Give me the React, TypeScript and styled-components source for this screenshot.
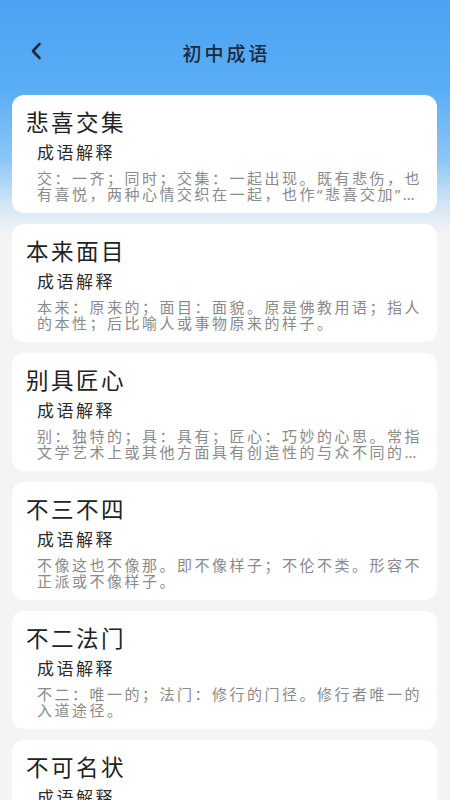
import React from 'react';
import styled, { createGlobalStyle } from 'styled-components';

const GlobalStyle = createGlobalStyle`
  html, body {
    margin: 0;
    padding: 0;
    background: #f4f4f5;
  }
  body {
    font-family: "Noto Sans CJK SC", "Noto Sans", sans-serif;
  }
`;

const Page = styled.div`
  min-height: 800px;
  background: linear-gradient(
    180deg,
    #4ca2f3 0px,
    #5aaef6 90px,
    #8cc6f6 160px,
    #d3e6f5 205px,
    #f4f4f5 235px,
    #f4f4f5 100%
  );
  overflow: hidden;
`;

const Header = styled.div`
  position: relative;
  display: flex;
  align-items: center;
  justify-content: center;
  height: 48px;
  padding-top: 28px;
`;

const BackButton = styled.button`
  position: absolute;
  left: 26px;
  top: 40px;
  width: 20px;
  height: 22px;
  padding: 0;
  border: none;
  background: none;
  display: flex;
  align-items: center;
  justify-content: center;
`;

const Title = styled.h1`
  margin: 0;
  padding-left: 3px;
  font-size: 19px;
  font-weight: 500;
  letter-spacing: 3px;
  color: #1c2a3b;
`;

const List = styled.div`
  display: flex;
  flex-direction: column;
  gap: 11px;
  padding: 19px 13px 20px 12px;
`;

const Card = styled.div`
  background: #ffffff;
  border-radius: 12px;
  padding: 10px 10px 11px 14px;
`;

const Word = styled.div`
  font-size: 22.5px;
  line-height: 32px;
  letter-spacing: 2.5px;
  color: #222222;
`;

const Body = styled.div`
  padding-left: 11px;
`;

const Label = styled.div`
  margin-top: 3px;
  font-size: 17px;
  line-height: 24px;
  letter-spacing: 2.5px;
  color: #2b2b2b;
`;

const Desc = styled.div`
  margin-top: 6px;
  font-family: "Noto Sans", "Noto Sans CJK SC", sans-serif;
  font-size: 15px;
  line-height: 16px;
  letter-spacing: 2.5px;
  color: #8a8a8a;
  display: -webkit-box;
  -webkit-line-clamp: 2;
  -webkit-box-orient: vertical;
  overflow: hidden;
  height: 32px;
`;

type Idiom = {
  word: string;
  desc: string;
};

const idioms: Idiom[] = [
  { word: '悲喜交集', desc: '交：一齐；同时；交集：一起出现。既有悲伤，也有喜悦，两种心情交织在一起，也作“悲喜交加”。又作“悲喜交并”。' },
  { word: '本来面目', desc: '本来：原来的；面目：面貌。原是佛教用语；指人的本性；后比喻人或事物原来的样子。' },
  { word: '别具匠心', desc: '别：独特的；具：具有；匠心：巧妙的心思。常指文学艺术上或其他方面具有创造性的与众不同的构思。' },
  { word: '不三不四', desc: '不像这也不像那。即不像样子；不伦不类。形容不正派或不像样子。' },
  { word: '不二法门', desc: '不二：唯一的；法门：修行的门径。修行者唯一的入道途径。' },
  { word: '不可名状', desc: '名：说出。不能用言语来形容。' },
];

const ChevronLeft = () => (
  <svg width="12" height="18" viewBox="0 0 12 18" fill="none">
    <path d="M9.5 2 L3 9 L9.5 16" stroke="#1c2a3b" strokeWidth="2.6" strokeLinecap="round" strokeLinejoin="round" />
  </svg>
);

export default function App() {
  return (
    <Page>
      <GlobalStyle />
      <Header>
        <BackButton aria-label="返回">
          <ChevronLeft />
        </BackButton>
        <Title>初中成语</Title>
      </Header>
      <List>
        {idioms.map(item => (
          <Card key={item.word}>
            <Word>{item.word}</Word>
            <Body>
              <Label>成语解释</Label>
              <Desc>{item.desc}</Desc>
            </Body>
          </Card>
        ))}
      </List>
    </Page>
  );
}
